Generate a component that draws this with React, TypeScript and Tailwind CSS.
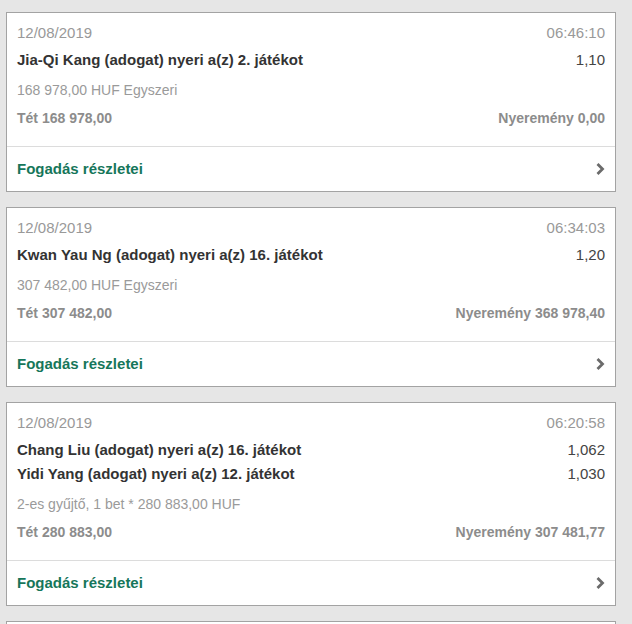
const bets = [
  {
    date: "12/08/2019",
    time: "06:46:10",
    picks: [{ label: "Jia-Qi Kang (adogat) nyeri a(z) 2. játékot", odds: "1,10" }],
    info: "168 978,00 HUF Egyszeri",
    stake: "Tét 168 978,00",
    win: "Nyeremény 0,00",
  },
  {
    date: "12/08/2019",
    time: "06:34:03",
    picks: [{ label: "Kwan Yau Ng (adogat) nyeri a(z) 16. játékot", odds: "1,20" }],
    info: "307 482,00 HUF Egyszeri",
    stake: "Tét 307 482,00",
    win: "Nyeremény 368 978,40",
  },
  {
    date: "12/08/2019",
    time: "06:20:58",
    picks: [
      { label: "Chang Liu (adogat) nyeri a(z) 16. játékot", odds: "1,062" },
      { label: "Yidi Yang (adogat) nyeri a(z) 12. játékot", odds: "1,030" },
    ],
    info: "2-es gyűjtő, 1 bet * 280 883,00 HUF",
    stake: "Tét 280 883,00",
    win: "Nyeremény 307 481,77",
  },
];

function Chevron() {
  return (
    <svg width="10" height="14" viewBox="0 0 10 14" className="text-[#6b6b6b]">
      <path d="M2.5 2 L7.5 7 L2.5 12" fill="none" stroke="currentColor" strokeWidth="2.8" />
    </svg>
  );
}

export default function App() {
  return (
    <div className="min-h-[624px] w-[632px] bg-[#e6e6e6] pt-[12px] pl-[6px] font-['Liberation_Sans',Arial,sans-serif]">
      <div className="flex w-[610px] flex-col gap-[15px]">
        {bets.map((bet, i) => (
          <div key={i} className="border border-[#a3a3a3] bg-white">
            <div className="px-[10px] pt-[10px] pb-[18px]">
              <div className="flex h-5 items-center justify-between text-[15px] text-[#999]">
                <span>{bet.date}</span>
                <span>{bet.time}</span>
              </div>
              <div className="mt-[5px]">
                {bet.picks.map((p, j) => (
                  <div key={j} className="flex h-6 items-center justify-between">
                    <span className="text-[15px] font-bold text-[#333]">{p.label}</span>
                    <span className="text-[15px] text-[#444]">{p.odds}</span>
                  </div>
                ))}
              </div>
              <div className="mt-2 flex h-5 items-center text-[14px] text-[#9a9a9a]">{bet.info}</div>
              <div className="mt-2 flex h-5 items-center justify-between text-[14px] font-bold text-[#8c8c8c]">
                <span>{bet.stake}</span>
                <span>{bet.win}</span>
              </div>
            </div>
            <div className="flex h-[45px] items-center justify-between border-t border-[#dcdcdc] pr-[10px] pl-[10px]">
              <span className="text-[15px] font-bold text-[#16765a]">Fogadás részletei</span>
              <Chevron />
            </div>
          </div>
        ))}
        <div className="h-8 border border-[#a3a3a3] bg-white" />
      </div>
    </div>
  );
}
